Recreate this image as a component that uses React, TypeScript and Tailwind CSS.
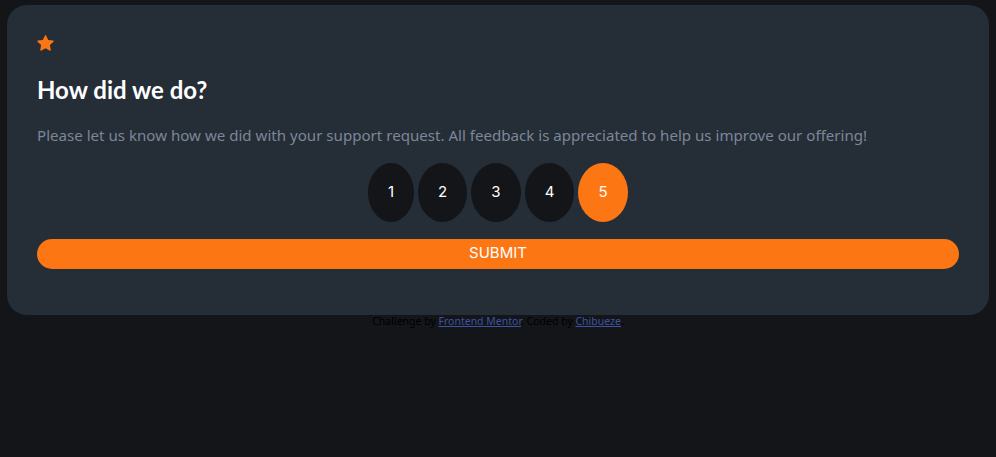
import React, { useState } from 'react';

const Star = () => (
  <svg width="17" height="16" viewBox="0 0 17 16" className="block">
    <path
      d="M9.067.43l2.2 4.456 4.918.715a.6.6 0 01.333 1.024l-3.559 3.469.84 4.898a.6.6 0 01-.871.633L8.53 13.312l-4.399 2.313a.6.6 0 01-.871-.633l.84-4.898L.541 6.625a.6.6 0 01.333-1.024l4.918-.715L7.992.43a.6.6 0 011.075 0z"
      fill="#FC7614"
    />
  </svg>
);

export default function App() {
  const [rating, setRating] = useState(5);
  const ratings = [
    { n: 1, w: 'w-[46px]' },
    { n: 2, w: 'w-[49px]' },
    { n: 3, w: 'w-[50px]' },
    { n: 4, w: 'w-[49px]' },
    { n: 5, w: 'w-[50px]' },
  ];

  return (
    <div className="min-h-[457px] w-full bg-[#131518] pt-[5px] px-[7px] font-['Noto_Sans',sans-serif]">
      {/* Card */}
      <div className="bg-[#252d37] rounded-[20px] px-[30px] pt-[30px] pb-[46px]">
        <Star />
        <h1 className="mt-[24px] text-[24px] leading-[30px] font-bold text-white font-['Lato',sans-serif]">How did we do?</h1>
        <p className="mt-[19px] text-[15.1px] leading-[22px] text-[#7c8798]">
          Please let us know how we did with your support request. All feedback is appreciated to help us improve our offering!
        </p>

        <div className="mt-[17px] flex justify-center gap-[4px]">
          {ratings.map(({ n, w }) => (
            <button
              key={n}
              onClick={() => setRating(n)}
              className={`h-[59px] ${w} rounded-[50%] text-[15px] text-white font-['Inter',sans-serif] ${
                rating === n ? 'bg-[#fc7614]' : 'bg-[#131518]'
              }`}
            >
              {n}
            </button>
          ))}
        </div>

        <button className="mt-[17px] w-full h-[30px] pb-[1px] rounded-full bg-[#fc7614] text-white text-[15px] font-['Inter',sans-serif]">
          SUBMIT
        </button>
      </div>

      {/* Footer */}
      <p className="text-center text-[10.5px] leading-[13px] mt-0 text-[#000]">
        Challenge by{' '}
        <a href="#" className="text-[#3e52a3] underline">Frontend Mentor</a>. Coded by{' '}
        <a href="#" className="text-[#3e52a3] underline">Chibueze</a>.
      </p>
    </div>
  );
}
